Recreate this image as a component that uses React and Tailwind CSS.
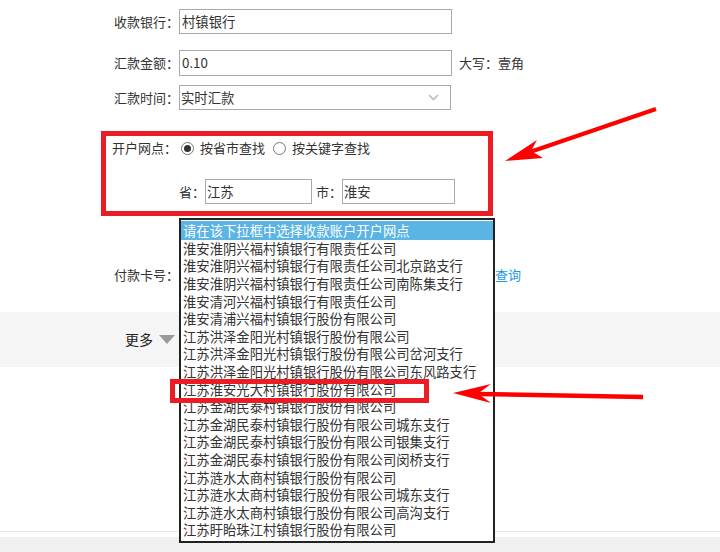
import React from "react";

const items = [
  "淮安淮阴兴福村镇银行有限责任公司",
  "淮安淮阴兴福村镇银行有限责任公司北京路支行",
  "淮安淮阴兴福村镇银行有限责任公司南陈集支行",
  "淮安清河兴福村镇银行有限责任公司",
  "淮安清浦兴福村镇银行股份有限公司",
  "江苏洪泽金阳光村镇银行股份有限公司",
  "江苏洪泽金阳光村镇银行股份有限公司岔河支行",
  "江苏洪泽金阳光村镇银行股份有限公司东风路支行",
  "江苏淮安光大村镇银行股份有限公司",
  "江苏金湖民泰村镇银行股份有限公司",
  "江苏金湖民泰村镇银行股份有限公司城东支行",
  "江苏金湖民泰村镇银行股份有限公司银集支行",
  "江苏金湖民泰村镇银行股份有限公司闵桥支行",
  "江苏涟水太商村镇银行股份有限公司",
  "江苏涟水太商村镇银行股份有限公司城东支行",
  "江苏涟水太商村镇银行股份有限公司高沟支行",
  "江苏盱眙珠江村镇银行股份有限公司",
];

function Radio({ checked }) {
  return (
    <span className="flex h-[13px] w-[13px] items-center justify-center rounded-full border border-[#7a7a7a] bg-white">
      {checked && <span className="h-[7px] w-[7px] rounded-full bg-[#333]" />}
    </span>
  );
}

export default function App() {
  return (
    <div
      className="relative h-[552px] w-[720px] overflow-hidden bg-white text-[13px] text-[#333]"
      style={{ fontFamily: '"Noto Sans CJK SC", "Liberation Sans", sans-serif' }}
    >
      <div className="pt-[9px]">
        {/* 收款银行 */}
        <div className="flex h-[25px] items-center">
          <div className="w-[179px] text-right">收款银行：</div>
          <div className="flex h-[25px] w-[273px] items-center border border-[#a9a9a9] pl-[2px] text-[13.33px]">
            村镇银行
          </div>
        </div>
        {/* 汇款金额 */}
        <div className="mt-[16px] flex h-[26px] items-center">
          <div className="w-[179px] text-right">汇款金额：</div>
          <div className="flex h-[26px] w-[273px] items-center border border-[#a9a9a9] pl-[2px] text-[13.33px]">
            0.10
          </div>
          <div className="ml-[7px]">大写：壹角</div>
        </div>
        {/* 汇款时间 */}
        <div className="mt-[9px] flex h-[25px] items-center">
          <div className="w-[179px] text-right">汇款时间：</div>
          <div className="flex h-[25px] w-[272px] items-center justify-between border border-[#a9a9a9] pl-[1px] pr-[11px] text-[13.33px]">
            <span>实时汇款</span>
            <svg width="11" height="7" viewBox="0 0 11 7">
              <path d="M1 1 L5.5 5.5 L10 1" fill="none" stroke="#aebfcb" strokeWidth="1.6" />
            </svg>
          </div>
        </div>
        {/* 开户网点 box */}
        <div className="ml-[101px] mt-[21px] h-[85px] w-[392px] border-[5px] border-[#ec1c24] pl-[6px]">
          <div className="flex h-[24px] items-center">
            <span>开户网点：</span>
            <span className="ml-[4px]"><Radio checked /></span>
            <span className="ml-[6px]">按省市查找</span>
            <span className="ml-[8px]"><Radio /></span>
            <span className="ml-[6px]">按关键字查找</span>
          </div>
          <div className="ml-[67px] mt-[19px] flex h-[25px] items-center">
            <span>省：</span>
            <div className="flex h-[25px] w-[107px] items-center border border-[#a9a9a9] pl-[1px] text-[13.33px]">江苏</div>
            <span className="ml-[4px]">市：</span>
            <div className="flex h-[25px] w-[113px] items-center border border-[#a9a9a9] pl-[1px] text-[13.33px]">淮安</div>
          </div>
        </div>
        {/* 付款卡号 */}
        <div className="mt-[46px] flex h-[26px] items-center">
          <div className="w-[179px] text-right">付款卡号：</div>
          <div className="h-[26px] w-[310px] border border-[#a9a9a9]" />
          <div className="ml-[6px] text-[#1a9be6]">查询</div>
        </div>
        {/* 更多 band */}
        <div className="mt-[24px] flex h-[55px] items-center bg-[#f5f5f5] pl-[125px]">
          <span className="text-[14px] text-[#222]">更多</span>
          <svg className="ml-[6px]" width="16" height="9" viewBox="0 0 16 9">
            <path d="M0 0 H16 L8 9 Z" fill="#9a9a9a" />
          </svg>
        </div>
        <div className="mt-[164px] h-px bg-[#e6e6e6]" />
        <div className="mt-[5px] h-[20px] bg-[#f0f0f0]" />
      </div>

      {/* dropdown list overlay */}
      <div className="absolute left-[179px] top-[218px] h-[325px] w-[316px] overflow-hidden border-2 border-[#222] bg-white pt-[1px] text-[13.33px] text-[#333]">
        <div className="flex h-[19px] items-center bg-[#5ab4e4] pl-[2px] text-white">
          请在该下拉框中选择收款账户开户网点
        </div>
        {items.map((t) => (
          <div key={t} className="flex h-[17.6px] items-center whitespace-nowrap pl-[2px]">
            {t}
          </div>
        ))}
      </div>

      {/* highlight box on item */}
      <div className="absolute left-[170px] top-[379px] h-[24px] w-[259px] border-[5px] border-[#ec1c24]" />

      {/* arrows */}
      <svg className="absolute left-0 top-0" width="720" height="552" viewBox="0 0 720 552">
        <line x1="656" y1="109" x2="530" y2="152" stroke="#ff0000" strokeWidth="4" />
        <polygon points="505,161 537,140 531,151 543,158" fill="#ff0000" />
        <line x1="643" y1="397" x2="478" y2="394" stroke="#ff0000" strokeWidth="4.5" />
        <polygon points="453,393 491,384 478,393.5 491,403" fill="#ff0000" />
      </svg>
    </div>
  );
}
